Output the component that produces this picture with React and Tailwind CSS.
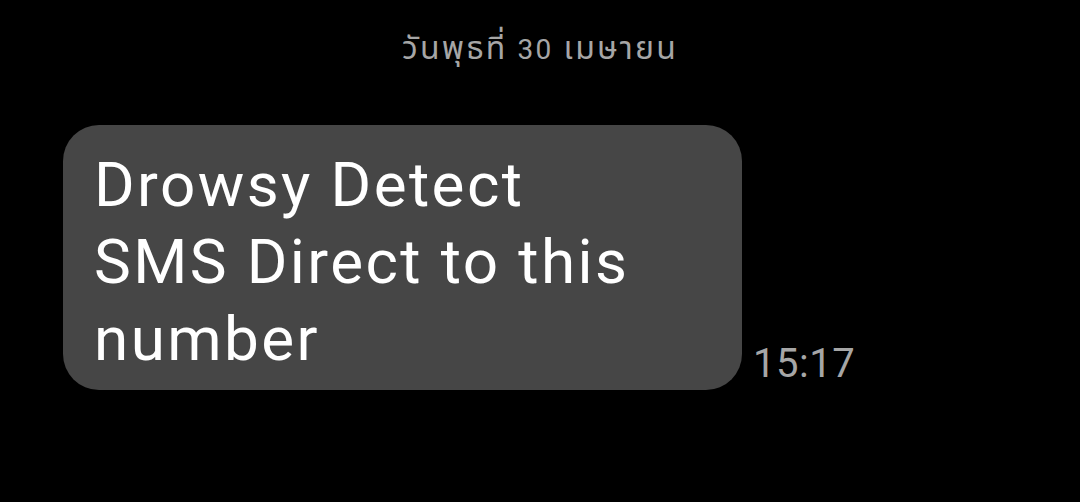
export default function App() {
  return (
    <div className="w-[1080px] h-[502px] bg-black overflow-hidden" style={{ fontFamily: 'Roboto, "Noto Sans", "Noto Sans Thai", sans-serif' }}>
      {/* Date header */}
      <div className="pt-[28px] text-center text-[32px] leading-[40px] tracking-[2.2px] text-[#a6a6a6]">
        วันพุธที่ <span className="text-[28px]">30</span> เมษายน
      </div>

      {/* Message row */}
      <div className="flex items-end gap-[11px] pl-[63px] pt-[55px]">
        <div className="w-[679px] rounded-[36px] bg-[#464646] pl-[31px] pr-6 pt-[21px] pb-[13px] text-[62px] leading-[77px] tracking-[2.4px] text-white">
          Drowsy Detect
          <br />
          SMS Direct to this
          <br />
          number
        </div>
        <div className="pb-[2px] text-[40px] leading-[48px] tracking-[0.5px] text-[#a6a6a6]">15:17</div>
      </div>
    </div>
  )
}
